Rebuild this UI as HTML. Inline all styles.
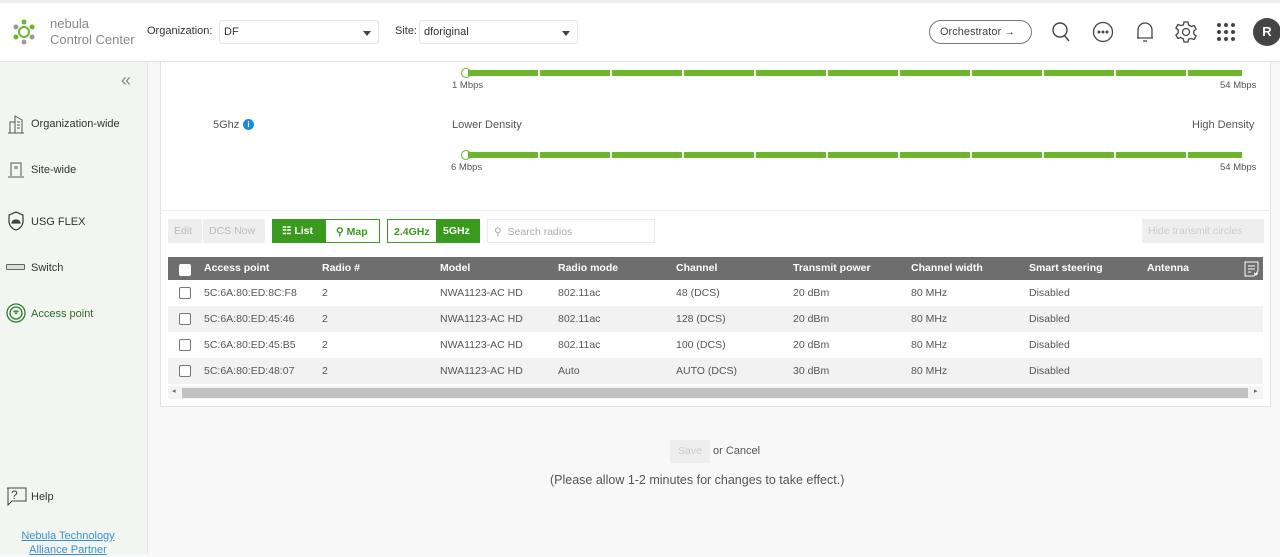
<!DOCTYPE html><html><head><style>
*{margin:0;padding:0;box-sizing:border-box}
body{width:1280px;height:554px;overflow:hidden;font-family:"Liberation Sans",sans-serif;background:#f7f8f7;position:relative;color:#444;font-size:11px}
.a{position:absolute}
.hdr{left:0;top:0;width:1280px;height:62px;background:#fff;border-top:3px solid #eee;border-bottom:1px solid #e2e2e2}
.side{left:0;top:62px;width:148px;height:492px;background:#f3f6f0;border-right:1px solid #e6e6e6}
.sel{height:24px;border:1px solid #e4e4e4;border-radius:3px;background:#fff;font-size:11px;padding:5px 4px;color:#333}
.tri{position:absolute;right:7px;top:10px;border:4px solid transparent;border-top:5px solid #444}
.card{left:160px;top:62px;width:1111px;height:345px;background:#fff;border:1px solid #e2e2e2;border-top:none}
.bar{height:6px;background:#6cb52d;background-image:repeating-linear-gradient(90deg,transparent 0 70px,#fff 70px 72px)}
.knob{width:10px;height:10px;border:1.5px solid #6cb52d;border-radius:50%;background:#fff}
.sm{font-size:9.5px;color:#555}
.nav{font-size:11px;color:#333}
table{border-collapse:collapse}
.th{left:168px;top:257px;width:1095px;height:23px;background:#6e6e6e}
.row{left:168px;width:1095px;height:26px}
.c{position:absolute;font-size:10.5px;color:#555;top:7px}
.h{position:absolute;font-size:10.5px;color:#fff;font-weight:bold;top:5px}
.cb{position:absolute;left:11px;top:7px;width:12px;height:12px;border:1px solid #777;border-radius:2px;background:#fff}
.btn{height:24px;font-size:10.5px;padding:6px 6px}
</style></head><body>
<div class="a hdr"></div>
<svg class="a" style="left:10px;top:18px" width="28" height="28" viewBox="0 0 28 28"><g fill="#6cb52d"><circle cx="14" cy="4" r="2.5"/><circle cx="22" cy="9" r="2.5"/><circle cx="6" cy="19" r="2.5"/></g><g fill="#999"><circle cx="6" cy="9" r="2.5"/><circle cx="22" cy="19" r="2.5"/><circle cx="14" cy="24" r="2.5"/></g><circle cx="14" cy="14" r="5" fill="none" stroke="#6cb52d" stroke-width="2"/></svg>
<div class="a" style="left:50px;top:16px;font-size:13px;color:#888;line-height:16px">nebula<br>Control Center</div>
<div class="a" style="left:147px;top:25px;font-size:11px;color:#333">Organization:</div>
<div class="a sel" style="left:219px;top:20px;width:160px">DF<span class="tri"></span></div>
<div class="a" style="left:395px;top:25px;font-size:11px;color:#333">Site:</div>
<div class="a sel" style="left:419px;top:20px;width:159px">dforiginal<span class="tri"></span></div>
<div class="a" style="left:929px;top:20px;width:103px;height:24px;border:1px solid #777;border-radius:12px;font-size:11px;color:#444;padding:5px 0 0 10px">Orchestrator →</div>
<svg class="a" style="left:1050px;top:21px" width="22" height="22" viewBox="0 0 22 22" fill="none" stroke="#444" stroke-width="1.4"><circle cx="10" cy="9" r="7"/><path d="M14 14l5 6"/></svg>
<svg class="a" style="left:1092px;top:21px" width="22" height="22" viewBox="0 0 22 22" fill="none" stroke="#444" stroke-width="1.3"><circle cx="11" cy="11" r="9.5"/><circle cx="7" cy="11" r=".8" fill="#444"/><circle cx="11" cy="11" r=".8" fill="#444"/><circle cx="15" cy="11" r=".8" fill="#444"/></svg>
<svg class="a" style="left:1134px;top:20px" width="22" height="24" viewBox="0 0 22 24" fill="none" stroke="#444" stroke-width="1.3"><path d="M4 18V10a7 7 0 0114 0v8H3h16"/><path d="M9 21h4"/></svg>
<svg class="a" style="left:1174px;top:20px" width="24" height="24" viewBox="0 0 24 24" fill="none" stroke="#444" stroke-width="1.3"><circle cx="12" cy="12" r="3.5"/><path d="M10 2h4l.6 3 2.6 1.5 2.9-1 2 3.5-2.3 2v3l2.3 2-2 3.5-2.9-1L14.6 19 14 22h-4l-.6-3-2.6-1.5-2.9 1-2-3.5 2.3-2v-3l-2.3-2 2-3.5 2.9 1L9.4 5z"/></svg>
<svg class="a" style="left:1216px;top:22px" width="22" height="20" viewBox="0 0 22 20" fill="#444"><circle cx="3" cy="3" r="2"/><circle cx="10" cy="3" r="2"/><circle cx="17" cy="3" r="2"/><circle cx="3" cy="10" r="2"/><circle cx="10" cy="10" r="2"/><circle cx="17" cy="10" r="2"/><circle cx="3" cy="17" r="2"/><circle cx="10" cy="17" r="2"/><circle cx="17" cy="17" r="2"/></svg>
<div class="a" style="left:1253px;top:18px;width:28px;height:28px;border-radius:50%;background:#444;color:#fff;font-weight:bold;font-size:13px;text-align:center;line-height:28px">R</div>

<div class="a side"></div>
<div class="a" style="left:121px;top:70px;font-size:18px;color:#888">«</div>
<svg class="a" style="left:7px;top:114px" width="18" height="20" viewBox="0 0 18 20" fill="none" stroke="#555"><path d="M1 19h16M3 19V8h5v11M8 19V2l7 4v13M10 8h3M10 11h3M10 14h3"/></svg>
<div class="a nav" style="left:31px;top:118px">Organization-wide</div>
<svg class="a" style="left:7px;top:161px" width="18" height="18" viewBox="0 0 18 18" fill="none" stroke="#555"><path d="M4 15V2h10v13M1 16h16M8 5v3M10 5v3"/></svg>
<div class="a nav" style="left:31px;top:164px">Site-wide</div>
<svg class="a" style="left:7px;top:211px" width="18" height="20" viewBox="0 0 18 20" fill="none" stroke="#444" stroke-width="1.3"><path d="M9 1l7 3v6c0 5-3.5 8-7 9-3.5-1-7-4-7-9V4z"/><path d="M5 12a4 3 0 018 0z" fill="#444"/></svg>
<div class="a nav" style="left:31px;top:216px">USG FLEX</div>
<div class="a" style="left:6px;top:264px;width:19px;height:6px;border:1px solid #666;border-radius:1px;background:#ddd"></div>
<div class="a nav" style="left:31px;top:262px">Switch</div>
<svg class="a" style="left:6px;top:303px" width="20" height="20" viewBox="0 0 20 20" fill="none" stroke="#2e7d32" stroke-width="1.3"><circle cx="10" cy="10" r="9"/><circle cx="10" cy="10" r="6"/><path d="M7.5 9a3.5 3.5 0 015 0M8.7 10.5a1.8 1.8 0 012.6 0"/></svg>
<div class="a nav" style="left:31px;top:308px;color:#2e6b2a">Access point</div>
<svg class="a" style="left:6px;top:487px" width="22" height="20" viewBox="0 0 22 20" fill="none" stroke="#444"><path d="M1 1h19v13H6l-4 4V1z"/></svg>
<div class="a" style="left:11px;top:488px;font-size:12px;color:#444">?</div>
<div class="a nav" style="left:31px;top:491px">Help</div>
<div class="a" style="left:18px;top:529px;font-size:11px;color:#3a8fd0;text-decoration:underline;line-height:14px;text-align:center;width:100px">Nebula Technology<br>Alliance Partner</div>

<div class="a card"></div>
<div class="a knob" style="left:461px;top:68px"></div>
<div class="a bar" style="left:468px;top:70px;width:774px"></div>
<div class="a sm" style="left:452px;top:80px">1 Mbps</div>
<div class="a sm" style="left:1220px;top:80px">54 Mbps</div>
<div class="a nav" style="left:213px;top:119px;color:#555">5Ghz</div>
<div class="a" style="left:243px;top:119px;width:11px;height:11px;border-radius:50%;background:#1e88e5;color:#fff;font-size:8px;text-align:center;line-height:11px;font-weight:bold">i</div>
<div class="a nav" style="left:452px;top:119px;color:#555">Lower Density</div>
<div class="a nav" style="left:1192px;top:119px;color:#555">High Density</div>
<div class="a knob" style="left:461px;top:150px"></div>
<div class="a bar" style="left:468px;top:152px;width:774px"></div>
<div class="a sm" style="left:451px;top:162px">6 Mbps</div>
<div class="a sm" style="left:1220px;top:162px">54 Mbps</div>
<div class="a" style="left:160px;top:210px;width:1111px;height:1px;background:#eee"></div>

<div class="a btn" style="left:168px;top:219px;width:34px;background:#eee;color:#bbb">Edit</div>
<div class="a btn" style="left:203px;top:219px;width:62px;background:#eee;color:#bbb">DCS Now</div>
<div class="a btn" style="left:272px;top:219px;width:53px;background:#3a9a1e;color:#fff;font-weight:bold;padding-left:10px">☷ List</div>
<div class="a btn" style="left:325px;top:219px;width:55px;border:1px solid #3a9a1e;color:#3a9a1e;font-weight:bold;padding-left:10px">⚲ Map</div>
<div class="a btn" style="left:387px;top:219px;width:50px;border:1px solid #3a9a1e;color:#3a9a1e;font-weight:bold">2.4GHz</div>
<div class="a btn" style="left:437px;top:219px;width:43px;background:#3a9a1e;color:#fff;font-weight:bold">5GHz</div>
<div class="a btn" style="left:487px;top:219px;width:168px;border:1px solid #eaeaea;color:#aaa">&#9906;&nbsp; Search radios</div>
<div class="a btn" style="left:1142px;top:219px;width:122px;background:#eee;color:#ccc">Hide transmit circles</div>

<div class="a th"><span class="cb" style="border-color:#fff"></span>
<span class="h" style="left:36px">Access point</span><span class="h" style="left:154px">Radio #</span><span class="h" style="left:272px">Model</span><span class="h" style="left:390px">Radio mode</span><span class="h" style="left:508px">Channel</span><span class="h" style="left:625px">Transmit power</span><span class="h" style="left:743px">Channel width</span><span class="h" style="left:861px">Smart steering</span><span class="h" style="left:979px">Antenna</span>
<svg style="position:absolute;left:1076px;top:4px" width="16" height="16" viewBox="0 0 16 16" fill="none" stroke="#fff"><path d="M1 1h13v9l-4 5H1zM4 5h7M4 8h7M4 11h3M10 12l2 2 2-2"/></svg></div>

<div class="a row" style="top:280px;background:#fff"><span class="cb"></span><span class="c" style="left:36px">5C:6A:80:ED:8C:F8</span><span class="c" style="left:154px">2</span><span class="c" style="left:272px">NWA1123-AC HD</span><span class="c" style="left:390px">802.11ac</span><span class="c" style="left:508px">48 (DCS)</span><span class="c" style="left:625px">20 dBm</span><span class="c" style="left:743px">80 MHz</span><span class="c" style="left:861px">Disabled</span></div>
<div class="a row" style="top:306px;background:#f2f2f2"><span class="cb"></span><span class="c" style="left:36px">5C:6A:80:ED:45:46</span><span class="c" style="left:154px">2</span><span class="c" style="left:272px">NWA1123-AC HD</span><span class="c" style="left:390px">802.11ac</span><span class="c" style="left:508px">128 (DCS)</span><span class="c" style="left:625px">20 dBm</span><span class="c" style="left:743px">80 MHz</span><span class="c" style="left:861px">Disabled</span></div>
<div class="a row" style="top:332px;background:#fff"><span class="cb"></span><span class="c" style="left:36px">5C:6A:80:ED:45:B5</span><span class="c" style="left:154px">2</span><span class="c" style="left:272px">NWA1123-AC HD</span><span class="c" style="left:390px">802.11ac</span><span class="c" style="left:508px">100 (DCS)</span><span class="c" style="left:625px">20 dBm</span><span class="c" style="left:743px">80 MHz</span><span class="c" style="left:861px">Disabled</span></div>
<div class="a row" style="top:358px;background:#f2f2f2"><span class="cb"></span><span class="c" style="left:36px">5C:6A:80:ED:48:07</span><span class="c" style="left:154px">2</span><span class="c" style="left:272px">NWA1123-AC HD</span><span class="c" style="left:390px">Auto</span><span class="c" style="left:508px">AUTO (DCS)</span><span class="c" style="left:625px">30 dBm</span><span class="c" style="left:743px">80 MHz</span><span class="c" style="left:861px">Disabled</span></div>
<div class="a" style="left:168px;top:386px;width:1095px;height:13px;background:#f4f4f4"></div>
<div class="a" style="left:182px;top:388px;width:1066px;height:10px;background:#c1c1c1"></div>
<div class="a" style="left:172px;top:387px;font-size:7px;color:#666">◂</div>
<div class="a" style="left:1254px;top:387px;font-size:7px;color:#666">▸</div>

<div class="a" style="left:670px;top:440px;width:40px;height:23px;background:#eee;color:#ccc;font-size:10.5px;text-align:center;line-height:23px">Save</div>
<div class="a" style="left:713px;top:445px;font-size:11px;color:#555">or Cancel</div>
<div class="a" style="left:550px;top:473px;font-size:12.5px;color:#555">(Please allow 1-2 minutes for changes to take effect.)</div>
</body></html>
